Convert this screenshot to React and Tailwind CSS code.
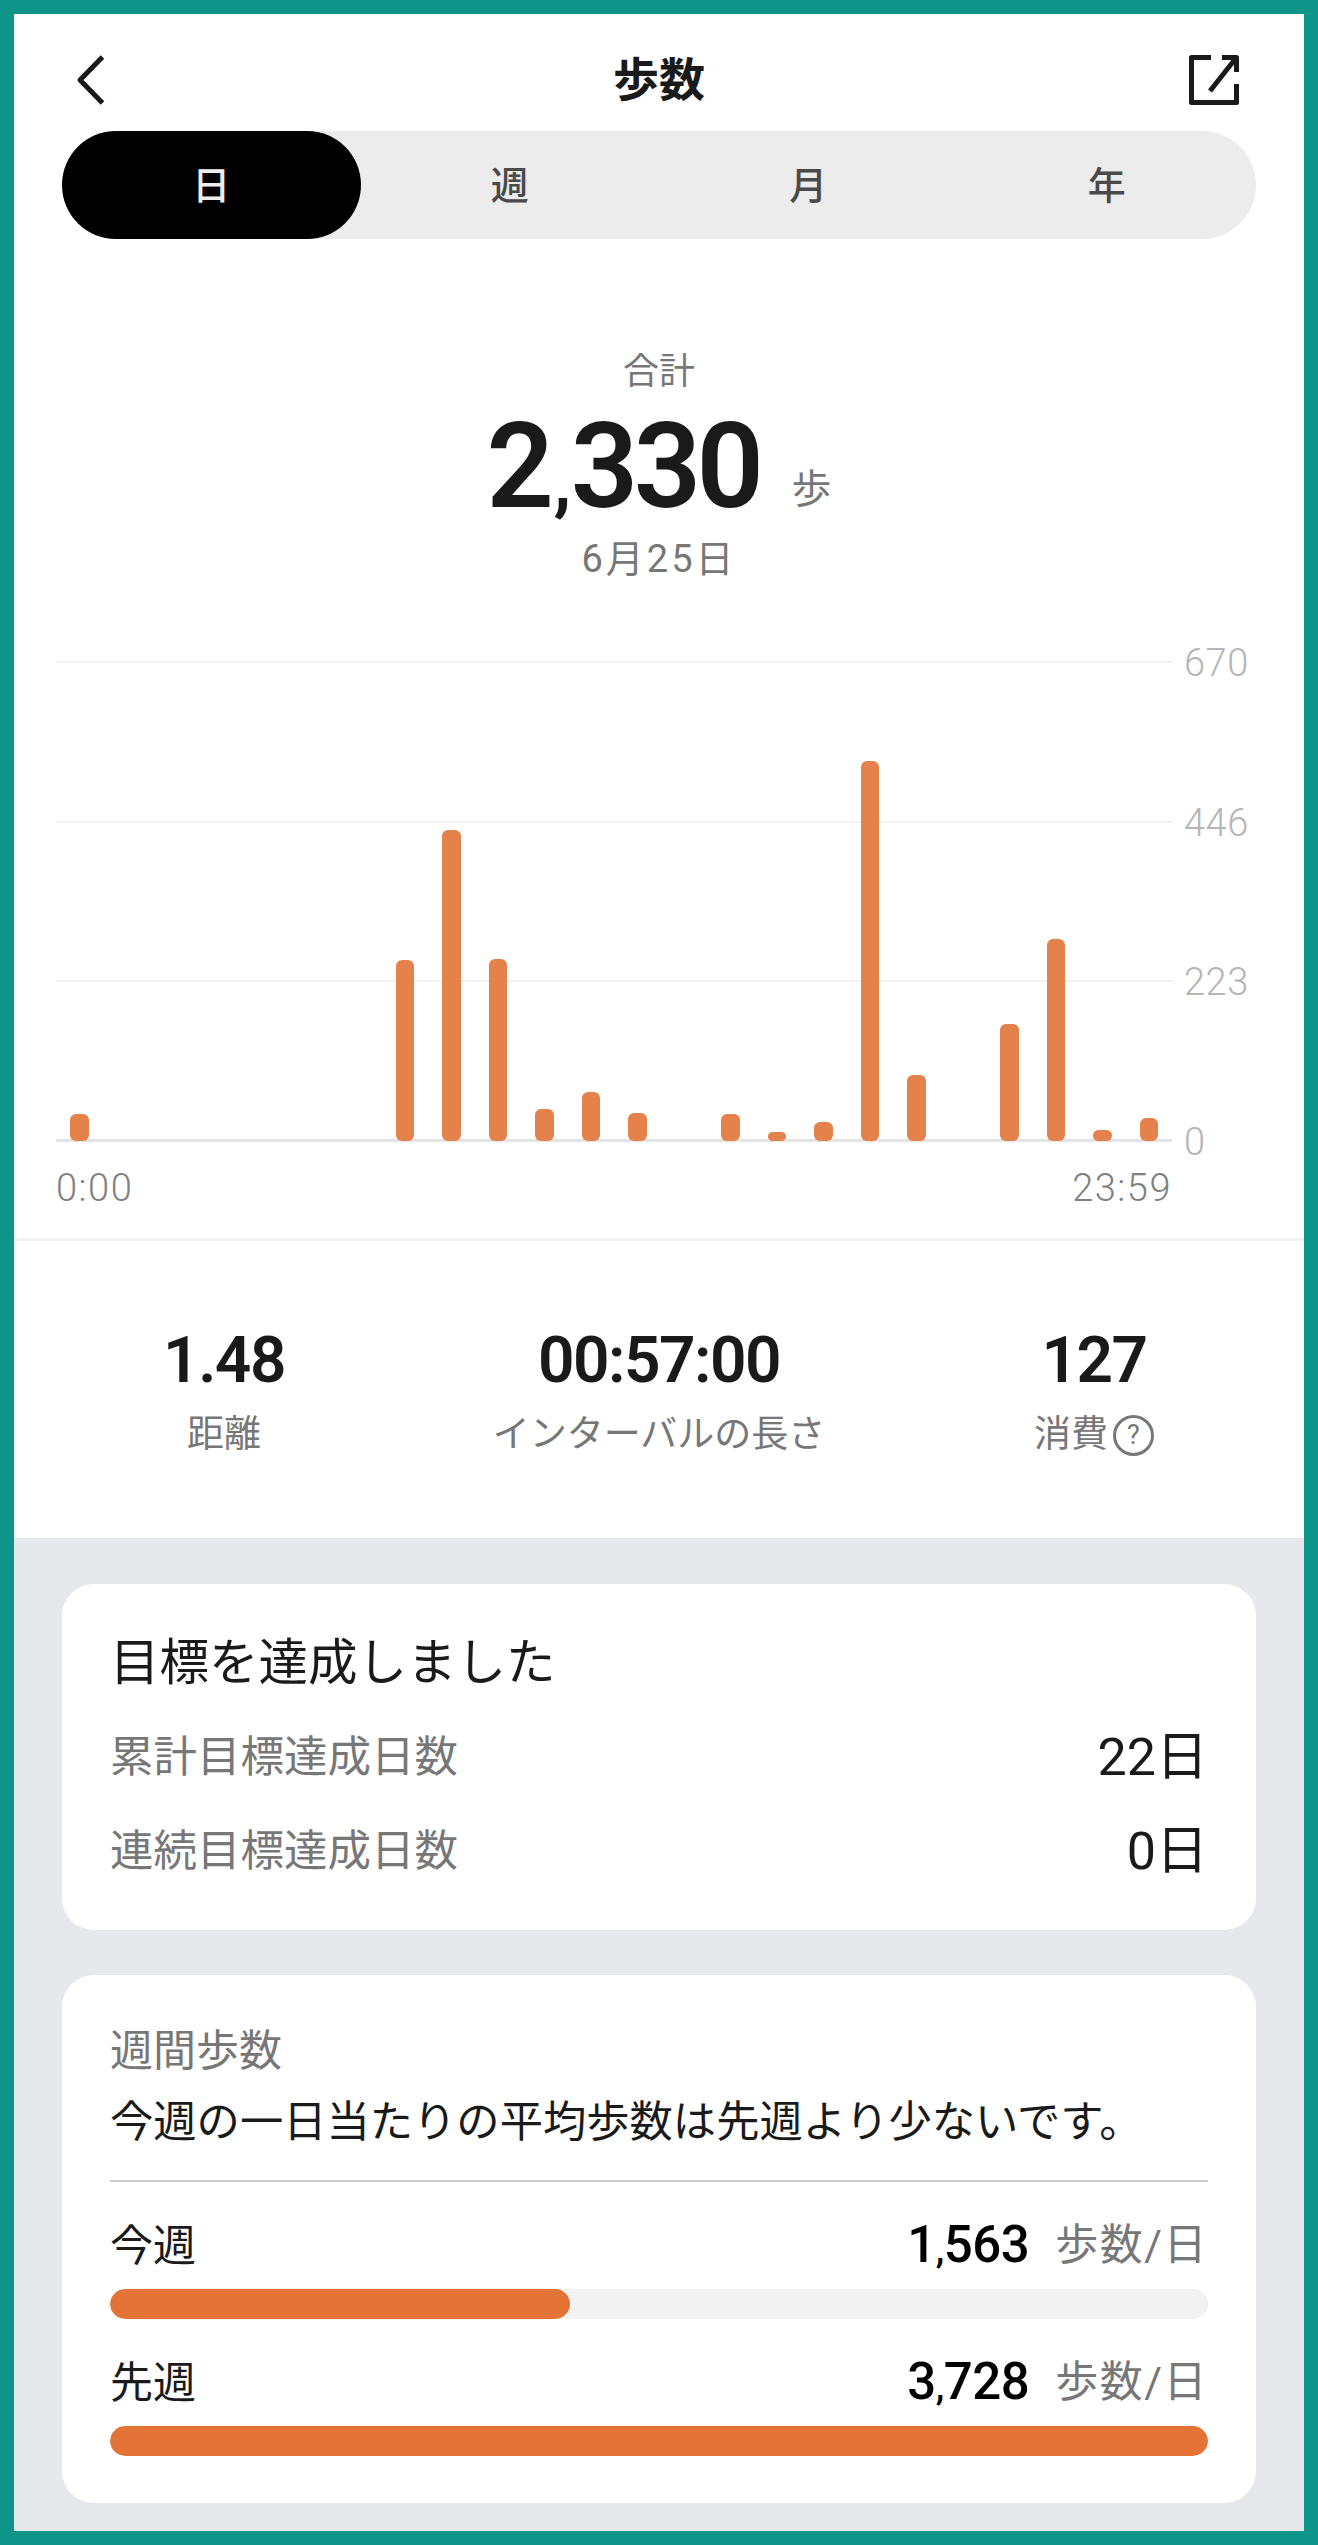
import React from 'react';

const FONT = "font-['Roboto','Noto_Sans_CJK_JP',sans-serif]";

// bar heights in px, one slot per hour
const HOURS = [27, 0, 0, 0, 0, 0, 0, 181, 311, 182, 32, 49, 28, 0, 27, 9, 19, 380, 66, 0, 117, 202, 11, 23];
const TICKS = ['670', '446', '223', '0'];
const TABS = ['日', '週', '月', '年'];

const BackIcon = () => (
    <svg width="30" height="50" viewBox="0 0 30 50" fill="none" stroke="#1a1a1a" strokeWidth="5" strokeLinejoin="round">
        <path d="M26.5 2 L4 25 L26.5 48" />
    </svg>
);

const ShareIcon = () => (
    <svg width="50" height="50" viewBox="0 0 50 50" fill="none" stroke="#1a1a1a" strokeWidth="5" strokeLinejoin="round">
        <path d="M22 2.5 H2.5 V47.5 H47.5 V29" />
        <path d="M33 2.5 H47.5 V17" />
        <path d="M47 3 L21 36" />
    </svg>
);

const Stat = ({ value, children }) => (
    <div className="flex flex-col items-center">
        <div className="text-[64px] leading-[70px] font-semibold text-[#1a1a1a] tracking-[-1.5px]">{value}</div>
        <div className="mt-[17px] text-[37px] leading-[44px] text-[#777777] flex items-center">{children}</div>
    </div>
);

const WeekRow = ({ label, whole, rest, percent }) => (
    <div>
        <div className="mt-[33px] h-[60px] flex items-center justify-between">
            <span className="pt-[2px] text-[43px] text-[#1a1a1a]">{label}</span>
            <span className="flex items-center">
                <span className="text-[51px] font-medium text-black tracking-[-0.5px]">
                    {whole}<span className="text-[38px]">,</span>{rest}
                </span>
                <span className="ml-[26px] text-[43px] text-[#777777] tracking-[1.5px]">歩数/日</span>
            </span>
        </div>
        <div className="mt-[14px] h-[30px] rounded-full bg-[#f2f2f2] overflow-hidden">
            <div className="h-full rounded-full bg-[#e37336]" style={{ width: `${percent}%` }} />
        </div>
    </div>
);

const App = () => {
    return (
        <div className={`${FONT} w-[1318px] h-[2545px] border-[14px] border-[#0f9489] bg-[#e6e8eb] flex flex-col`}>
            <div className="bg-white h-[1524px] shrink-0">
                {/* Nav */}
                <div className="h-[117px] pt-[15px] px-[62px] grid grid-cols-3 items-center">
                    <BackIcon />
                    <div className="text-[46px] font-bold text-[#1a1a1a] text-center">歩数</div>
                    <div className="mr-[3px] justify-self-end"><ShareIcon /></div>
                </div>

                {/* Tabs */}
                <div className="mx-[48px] h-[108px] rounded-[54px] bg-[#ececec] grid grid-cols-4">
                    {TABS.map((tab, i) => (
                        <div
                            key={tab}
                            className={`pt-[2px] flex items-center justify-center rounded-[54px] text-[38px] font-medium ${i === 0 ? 'bg-black text-[#eeeeee]' : 'text-[#4a4a4a]'}`}
                        >
                            {tab}
                        </div>
                    ))}
                </div>

                {/* Total */}
                <div className="flex flex-col items-center">
                    <div className="mt-[109px] text-[36px] leading-[48px] text-[#777777]">合計</div>
                    <div className="mt-[16px] h-[110px] flex items-baseline">
                        <span className="text-[118px] leading-[110px] font-semibold text-[#1a1a1a] tracking-[-4.5px]">
                            2<span className="mx-[4px] text-[76px]">,</span>330
                        </span>
                        <span className="ml-[32px] -translate-y-[4px] text-[40px] text-[#777777]">歩</span>
                    </div>
                    <div className="mt-[15px] text-[38px] leading-[44px] text-[#777777] tracking-[3px]">6月25日</div>
                </div>

                {/* Chart */}
                <div className="mt-[81px] ml-[42px] relative w-[1116px] h-[479px]">
                    <div className="absolute inset-0 flex flex-col justify-between">
                        {TICKS.map((tick, i) => (
                            <div key={tick} className="h-0 flex items-center">
                                <div className={`w-[1116px] shrink-0 ${i === 3 ? 'h-[3px] bg-[#e4e4e4]' : 'h-[2px] bg-[#f2f2f2]'}`} />
                                <span className="ml-[12px] pt-[3px] text-[38px] font-light text-[#b5b5b5] tracking-[0.5px]">{tick}</span>
                            </div>
                        ))}
                    </div>
                    <div className="absolute inset-0 flex items-end">
                        {HOURS.map((h, i) => (
                            <div key={i} className="flex-1 flex justify-center">
                                {h > 0 && <div className="w-[18.5px] rounded-[6px] bg-[#e5814a]" style={{ height: h }} />}
                            </div>
                        ))}
                    </div>
                </div>
                <div className="ml-[42px] w-[1116px] mt-[27px] h-[40px] flex items-center justify-between text-[38px] font-light text-[#808080] tracking-[1.5px]">
                    <span>0:00</span>
                    <span>23:59</span>
                </div>
                <div className="mt-[30px] h-[3px] bg-[#f2f2f2]" />

                {/* Stats */}
                <div className="pt-[85px] grid grid-cols-[420px_450px_420px]">
                    <Stat value="1.48">距離</Stat>
                    <Stat value="00:57:00">インターバルの長さ</Stat>
                    <Stat value="127">
                        消費
                        <span className="ml-[5px] w-[41px] h-[41px] rounded-full border-[3px] border-[#777777] flex items-center justify-center text-[27px] leading-none">?</span>
                    </Stat>
                </div>
            </div>

            <div className="px-[48px] pt-[46px] flex flex-col gap-[45px]">
                {/* Goal card */}
                <div className="bg-white rounded-[32px] h-[346px] px-[48px] pt-[49px]">
                    <div className="text-[49.5px] leading-[60px] text-[#1a1a1a]">目標を達成しました</div>
                    <div className="mt-[35px] h-[60px] flex items-center justify-between">
                        <span className="text-[43.5px] text-[#777777]">累計目標達成日数</span>
                        <span className="text-[52px] text-[#1a1a1a]">22日</span>
                    </div>
                    <div className="mt-[34px] h-[60px] flex items-center justify-between">
                        <span className="text-[43.5px] text-[#777777]">連続目標達成日数</span>
                        <span className="text-[52px] text-[#1a1a1a]">0日</span>
                    </div>
                </div>

                {/* Weekly card */}
                <div className="bg-white rounded-[32px] h-[528px] px-[48px] pt-[48px]">
                    <div className="text-[43px] leading-[56px] text-[#777777]">週間歩数</div>
                    <div className="mt-[16px] text-[43.3px] leading-[56px] text-[#1a1a1a] whitespace-nowrap">今週の一日当たりの平均歩数は先週より少ないです。</div>
                    <div className="mt-[29px] h-[2px] bg-[#cccccc]" />
                    <WeekRow label="今週" whole="1" rest="563" percent={41.9} />
                    <WeekRow label="先週" whole="3" rest="728" percent={100} />
                </div>
            </div>
        </div>
    );
};

export default App;
